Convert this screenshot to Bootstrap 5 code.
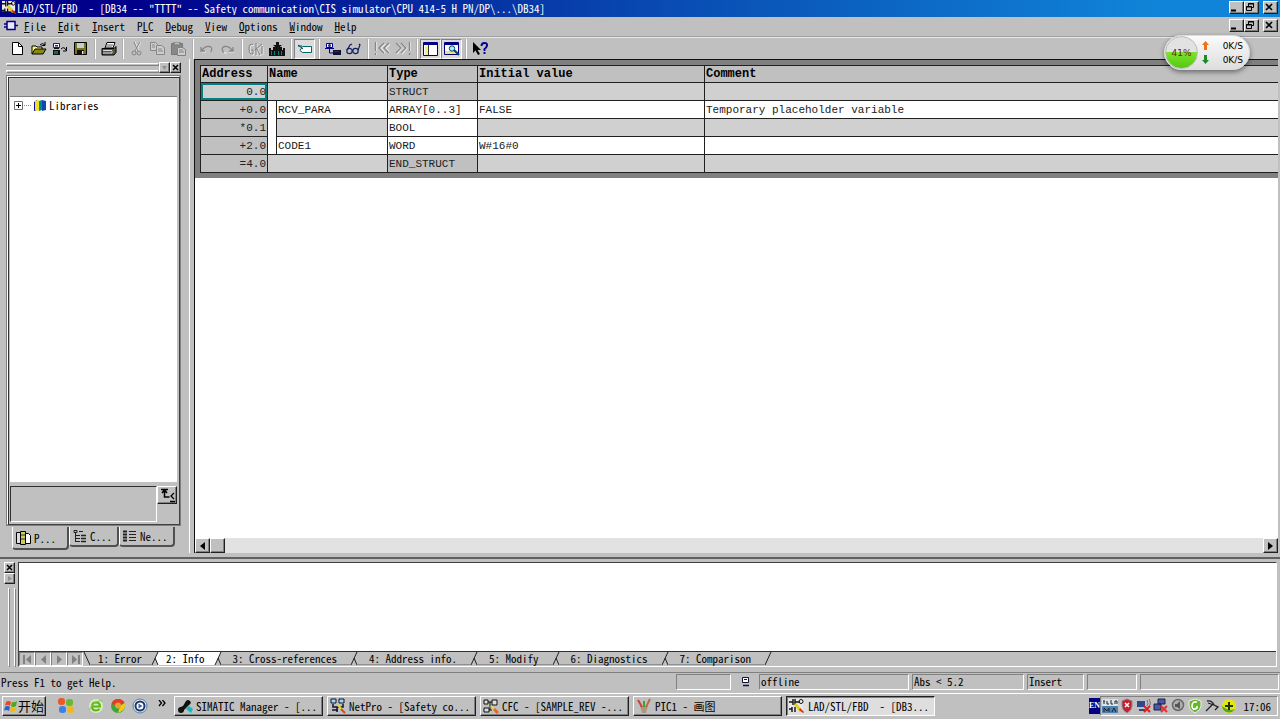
<!DOCTYPE html>
<html lang="en">
<head>
<meta charset="utf-8">
<meta name="viewport" content="width=device-width, initial-scale=1">
<title>LAD/STL/FBD</title>
<link href="https://cdn.jsdelivr.net/npm/bootstrap@5.3.0/dist/css/bootstrap.min.css" rel="stylesheet">
<style>
:root{--face:#c0c0c0;--hi:#fff;--sh:#808080;--dk:#202020}
body{font:11px/14px "Noto Sans Mono CJK SC","Liberation Mono","Noto Sans CJK SC",monospace;color:#000;background:var(--face)}
button,input,select{font:inherit;color:inherit}
button{border:0;padding:0;background:var(--face)}
a{color:inherit;text-decoration:none}
svg{display:block;flex:none}
.ws{white-space:pre}
.raised{background:var(--face);border:1px solid;border-color:var(--hi) var(--dk) var(--dk) var(--hi);box-shadow:inset -1px -1px var(--sh)}
.sunken{border:1px solid;border-color:var(--sh) var(--hi) var(--hi) var(--sh)}
.titlebar{height:17px;background:linear-gradient(90deg,#00008a 10%,#0848b0 50%,#1084d8 90%);color:#fff;padding:0 2px 2px 2px}
.menubar{height:20px;padding:0 2px 2px 4px;border-bottom:1px solid #a0a0a0}
.menubar nav{gap:12px;margin-left:6px}
.winbtn{width:15px;height:13px}
.toolbar{height:22px;padding-left:7px;border-top:1px solid #e8e8e8;position:relative;z-index:2}
.tool{width:21px;height:20px;display:grid;place-items:center;border:1px solid transparent}
.tool.pressed{border-color:var(--sh) var(--hi) var(--hi) var(--sh);background:#dcdcdc}
.tsep{width:2px;height:20px;margin:0 2px 0 3px;border-left:1px solid #b0b0b0;border-right:1px solid var(--hi)}
.meter{position:absolute;right:30px;top:-3px;height:35px;width:86px;border-radius:18px;background:linear-gradient(#fafafa,#dedede);border:1px solid #ddd;box-shadow:0 2px 5px #0007;font:10px/14px "DejaVu Sans","Noto Sans",sans-serif}
.meter .ball{width:33px;height:33px;border-radius:50%;background:linear-gradient(#e2e2e2 48%,#7be428 50%,#55c713);border:1px solid #bbb;color:#6a2020;font-size:9px}
.meter .rate{width:34px;text-align:right;font-size:9px}
.dock{width:190px;padding:3px 8px 0 6px;border-right:1px solid var(--hi)}
.grip{height:3px;border:1px solid;border-color:var(--hi) var(--sh) var(--sh) var(--hi)}
.mini{width:11px;height:11px;display:grid;place-items:center}
.frame{border:2px solid;border-color:var(--hi) #404040 #404040 var(--hi);outline:1px solid var(--sh);outline-offset:-1px;padding:2px;margin-top:2px;box-shadow:inset 1px 1px #303030}
.treehead{height:18px;border-bottom:1px solid var(--sh);background:#bcbcbc}
.well{border:1px solid;border-color:#303030 var(--hi) var(--hi) #303030}
.treefoot{height:41px}
.treerow{height:16px;padding-left:4px;gap:2px}
.docktabs{margin:1px 0 0 6px;height:26px}
.docktab{height:20px;width:50px;border:solid;border-width:0 2px 2px 1px;border-color:var(--hi) #505050 #505050 var(--hi);border-radius:0 0 4px 4px;gap:3px;padding:0 3px}
.docktab.active{height:23px;width:57px}
.docktab.wide{width:56px}
.editor{border:solid;border-width:1px 0 0 1px;border-color:#101010;margin:0 2px 0 4px;background:#fff}
.gridwrap{background:#808080;padding:5px 0 5px 5px}
.decl{width:100%;table-layout:fixed;border-collapse:collapse;background:#d0d0d0;font:11px/14px "Liberation Mono",monospace;color:#202020}
.decl th,.decl td{border:1px solid #202020;height:18px;padding:0 1px;white-space:pre;overflow:hidden;vertical-align:middle}
.decl th{background:#c0c0c0;font-size:12px;color:#000;height:17px}
.decl tr>*:last-child{border-right:0}
.decl .addr{text-align:right;background:#c0c0c0}
.decl .edit{background:#fff}
.decl .kw{background:#c0c0c0}
.decl .cur{box-shadow:inset 0 0 0 2px #008080;background:#d0d0d0}
.c-addr{width:67px}.c-ind{width:9px}.c-name{width:111px}.c-type{width:90px}.c-init{width:227px}
.hscroll{height:15px;background:#e2e2e2}
.hscroll button,.hscroll i{width:15px;height:15px;display:grid;place-items:center}
.output{height:115px;margin-top:4px;border-top:2px solid #606060;padding:3px 3px 5px 3px}
.output .side{width:15px;padding:0 3px 0 1px}
.vgrip{width:3px;border:1px solid;border-color:var(--hi) var(--sh) var(--sh) var(--hi)}
.pane{border:1px solid;border-color:#404040 var(--hi) var(--hi) #404040;background:#fff}
.pane textarea{border:0;resize:none;outline:0;padding:2px;background:#fff}
.tabrow{height:15px;background:var(--face);border-top:1px solid #303030}
.navb{width:16px;height:14px;display:grid;place-items:center}
.otab{height:13px;line-height:12px;padding:0 8px;background:var(--face);border-bottom:1px solid #909090}
.otab.tight{padding:0 9px 0 7px}
.otab.roomy{padding:0 13px 0 11px}
.otab.active{background:#fff;border-color:#fff}
.status{height:21px;border-top:1px solid var(--sh);padding:0 1px 2px 1px;gap:3px}
.status .sunken{height:16px;padding:0 1px;line-height:12px}
.w-a{width:55px}.w-b{width:150px}.w-c{width:112px}.w-d{width:57px}.w-e{width:50px}.w-f{width:139px}
.taskbar{height:26px;border-top:1px solid var(--hi);padding:0 2px 1px 2px}
.startb{width:44px;height:20px;font:13px/16px "Noto Sans CJK SC",sans-serif}
.task{flex:0 1 149px;height:20px;gap:3px;padding:0 2px;min-width:0;text-align:left;white-space:pre;overflow:hidden}
.task.on{border-color:var(--dk) var(--hi) var(--hi) var(--dk);background:#dedede;box-shadow:inset 1px 1px var(--sh)}
.lang{height:16px;background:#000080;color:#fff;font:bold 8px/16px "Liberation Serif",serif}
.tray{height:20px;width:178px;gap:1px;padding:0 2px 0 1px}
.quick{width:120px;gap:6px}
</style>
</head>
<body class="d-flex flex-column min-vh-100 overflow-hidden">
<svg width="0" height="0" class="position-absolute" aria-hidden="true">
<defs>
<symbol id="i-min" viewBox="0 0 10 9"><path d="M1 7.5h5" stroke="#000" stroke-width="2"/></symbol>
<symbol id="i-res" viewBox="0 0 10 9"><path d="M3.5 3V.5h5v4H7M3 1h6M1.500 3.500h5v4h-5zM1 4h6" fill="none" stroke="#000"/></symbol>
<symbol id="i-x" viewBox="0 0 10 9"><path d="M2 1l6 6M8 1l-6 6" stroke="#000" stroke-width="1.700"/></symbol>
<symbol id="i-lad" viewBox="0 0 16 16"><path fill="#e8e8e8" d="M0 1h14v11H0z"/><path d="M0 4h4M4 1v6M6 1v6M6 4h5M0 11h3M3 9v5M6 9v5" stroke="#111" stroke-width="1.400"/><circle cx="12" cy="3.500" r="2" fill="none" stroke="#111"/><path d="M6 6l6 7" stroke="#e0d020" stroke-width="3"/><path d="M11 10l4 4-1 1-4-3z" fill="#d83010"/></symbol>
</defs>
</svg>

<header class="titlebar d-flex align-items-center">
<svg width="15" height="15"><use href="#i-lad"/></svg>
<span class="ws flex-grow-1 overflow-hidden">LAD/STL/FBD  - [DB34 -- "TTTT" -- Safety communication\CIS simulator\CPU 414-5 H PN/DP\...\DB34]</span>
<button class="raised winbtn" aria-label="Minimize"><svg width="10" height="9"><use href="#i-min"/></svg></button>
<button class="raised winbtn" aria-label="Restore"><svg width="10" height="9"><use href="#i-res"/></svg></button>
<button class="raised winbtn ms-1" aria-label="Close"><svg width="10" height="9"><use href="#i-x"/></svg></button>
</header>

<div class="menubar d-flex align-items-center">
<svg width="14" height="12" viewBox="0 0 14 12"><path d="M3 1.500h8v8H3z" fill="#e8e8ff" stroke="#000080" stroke-width="1.500"/><path d="M0 4h3M0 7h3M11 5.500h3" stroke="#000080" stroke-width="1.500"/></svg>
<nav class="d-flex flex-grow-1">
<a href="#"><u>F</u>ile</a><a href="#"><u>E</u>dit</a><a href="#"><u>I</u>nsert</a><a href="#">P<u>L</u>C</a><a href="#"><u>D</u>ebug</a><a href="#"><u>V</u>iew</a><a href="#"><u>O</u>ptions</a><a href="#"><u>W</u>indow</a><a href="#"><u>H</u>elp</a>
</nav>
<button class="raised winbtn" aria-label="Minimize document"><svg width="10" height="9"><use href="#i-min"/></svg></button>
<button class="raised winbtn" aria-label="Restore document"><svg width="10" height="9"><use href="#i-res"/></svg></button>
<button class="raised winbtn ms-1" aria-label="Close document"><svg width="10" height="9"><use href="#i-x"/></svg></button>
</div>

<div class="toolbar d-flex align-items-center" role="toolbar">
<button class="tool" aria-label="New"><svg width="11" height="13"><path d="M.5.5h6l4 4v8H.5z" fill="#fff" stroke="#000"/><path d="M6.500.5v4h4" fill="none" stroke="#000"/></svg></button>
<button class="tool" aria-label="Open"><svg width="16" height="13"><path d="M1 12V4h4l1 1h5v3" fill="#ff6" stroke="#000"/><path d="M1 12l3-5h11l-3 5z" fill="#8a8a10" stroke="#000"/><path d="M9 3q2-3 5 0M14 0v3.500h-3.500" fill="none" stroke="#000"/></svg></button>
<button class="tool" aria-label="Open online"><svg width="16" height="14"><path d="M1.500 1.500h6v4h-6z" fill="#fff" stroke="#224"/><path d="M3 3h3v1.500H3z" fill="#22a"/><path d="M2 6h5v1H2zM1 8h7v5H1z" fill="#111"/><path d="M2 9h4v3H2z" fill="#166"/><path d="M9 7q3-3 5 1M14.500 5v4H11" fill="none" stroke="#000"/></svg></button>
<button class="tool" aria-label="Save"><svg width="13" height="13"><path d="M.5.5h12v12H.5z" fill="#77771a" stroke="#000"/><path d="M3 1h7v5H3z" fill="#ccc"/><path d="M3 8h7v5H3z" fill="#111"/><path d="M8 9h1.500v3H8z" fill="#eee"/></svg></button>
<span class="tsep"></span>
<button class="tool" aria-label="Print"><svg width="16" height="14"><path d="M4 6l2-5.500h8L12 6z" fill="#fff" stroke="#000"/><path d="M6 3h6M5 5h6" stroke="#555"/><path d="M1 6.500h12l2-2v6l-2 2.500H1z" fill="#555" stroke="#000"/><path d="M2 8.500h9M2 11h9" stroke="#ddd"/><path d="M10 10h2" stroke="#dd0"/></svg></button>
<span class="tsep"></span>
<button class="tool" aria-label="Cut" disabled><svg width="12" height="14" fill="none" stroke="#868686"><path d="M4 0l4 9M10 0L5 9" stroke="#eee"/><path d="M3 0l4 9M9 0L4 9"/><circle cx="3" cy="11" r="2"/><circle cx="8" cy="11" r="2"/></svg></button>
<button class="tool" aria-label="Copy" disabled><svg width="15" height="13" fill="#ccc" stroke="#868686"><path d="M.5.5h5l2 2v6h-7z"/><path d="M6.500 3.500h5l3 2v7h-8zM2 3h3M2 5h3M8 7h4M8 9h5"/></svg></button>
<button class="tool" aria-label="Paste" disabled><svg width="15" height="14"><path d="M.5 1.500h11v11H.5z" fill="#888" stroke="#777"/><path d="M3 0h6v3H3z" fill="#bbb" stroke="#777"/><path d="M6.500 5.500h5l3 2v6h-8z" fill="#ccc" stroke="#808080"/><path d="M8 8h4M8 10h5" stroke="#808080"/></svg></button>
<span class="tsep"></span>
<button class="tool" aria-label="Undo" disabled><svg width="13" height="10" fill="none"><path d="M2 8h4M10 9q3-2 1-6" stroke="#eee"/><path d="M1 3v4h4M1.500 6.500q4-5 8-4t1 6" stroke="#868686" stroke-width="1.300"/></svg></button>
<button class="tool" aria-label="Redo" disabled><svg width="13" height="10" fill="none"><path d="M8 8h5M3 9h3" stroke="#eee"/><path d="M12 3v4H8M11.500 6.500q-4-5-8-4t-1 6" stroke="#868686" stroke-width="1.300"/></svg></button>
<span class="tsep"></span>
<button class="tool" aria-label="Compile" disabled><svg width="16" height="14" fill="none"><path d="M5 2.500Q1 1 1 7t4 5V8H3M8 1v12M7 8l7-6M9 7l3 6M14 4v8" stroke="#eee" transform="translate(1 1)"/><path d="M5 2.500Q1 1 1 7t4 5V8H3M8 1v12M7 8l7-6M9 7l3 6M14 4v8" stroke="#808080"/></svg></button>
<button class="tool" aria-label="Download"><svg width="16" height="14"><path d="M0 6h2v2h12V6h2v8H0z" fill="#111"/><path d="M7 0h3v3h3L8.500 7 4 3h3zM4 5h9v3H4z" fill="#111"/><path d="M2.500 9v4M5.500 9v4M9.500 9v4M12.500 9v4" stroke="#0a8080"/></svg></button>
<span class="tsep"></span>
<button class="tool pressed" aria-label="Symbolic view" aria-pressed="true"><svg width="14" height="12"><path d="M4.500 3.500h9v6h-9L2 7.500z" fill="#fff" stroke="#066"/><path d="M0 2l5 4M0 3h4" stroke="#044"/></svg></button>
<span class="tsep"></span>
<button class="tool" aria-label="Monitor"><svg width="16" height="14"><path d="M1.500 1.500h6v4h-6z" fill="#fff" stroke="#008"/><circle cx="4.500" cy="3.500" r="1.500" fill="#22a"/><path d="M0 6.500h9M4.500 7v4H8" stroke="#008" fill="none"/><path d="M8 8h8v5H8z" fill="#113"/><path d="M9 9h5v1H9z" fill="#22b"/></svg></button>
<button class="tool" aria-label="Glasses"><svg width="15" height="12" fill="none" stroke="#112060" stroke-width="1.200"><circle cx="3.500" cy="8" r="2.700"/><circle cx="9.500" cy="8" r="2.700"/><path d="M1 7l3-5 2-1M12 7l2-5-1-1M6 7.500h1"/></svg></button>
<span class="tsep"></span>
<button class="tool" aria-label="Previous error" disabled><svg width="16" height="13" fill="none" stroke="#868686" stroke-width="1.300"><path d="M2.500 0v9M2.500 11v2M11 2L7 6l4 5M16 2l-4 4 4 5" stroke="#eee"/><path d="M1.500 0v9M1.500 11v2M10 1L5 6l5 5M15 1l-5 5 5 5"/></svg></button>
<button class="tool" aria-label="Next error" disabled><svg width="16" height="13" fill="none" stroke="#868686" stroke-width="1.300"><path d="M15.500 0v9M2 2l5 4-5 6M7 2l5 4-5 6" stroke="#eee"/><path d="M14.500 0v9M14.500 11v2M1 1l5 5-5 5M6 1l5 5-5 5"/></svg></button>
<span class="tsep"></span>
<button class="tool pressed" aria-label="Overviews" aria-pressed="true"><svg width="15" height="14"><path d="M.5.5h14v13H.5z" fill="#fff" stroke="#000080"/><path d="M1 1h13v2H1z" fill="#000080"/><path d="M2 4h3v9H2z" fill="#f2f090"/><path d="M5.500 3v10" stroke="#333"/></svg></button>
<button class="tool pressed" aria-label="Details" aria-pressed="true"><svg width="16" height="14"><path d="M.5.5h14v12H.5z" fill="#fff" stroke="#000080"/><path d="M1 1h13v2H1z" fill="#000080"/><path d="M1 9h13v3H1z" fill="#e8e480"/><circle cx="8" cy="6.500" r="2.700" fill="#aef" stroke="#046"/><path d="M10 8l5 5" stroke="#046" stroke-width="2"/></svg></button>
<span class="tsep"></span>
<button class="tool" aria-label="Context help"><svg width="16" height="14"><path d="M1 0v11l2.500-2.500L6 13l2-1-2.500-4H9z"/><path d="M9.500 4q0-3 3-3t2.500 2.500-2.500 3.500v2M12.500 10v2" fill="none" stroke="#000090" stroke-width="1.900"/></svg></button>
<div class="meter d-flex align-items-center">
<span class="ball d-flex align-items-center justify-content-center flex-shrink-0">41%</span>
<div class="flex-grow-1 ps-1">
<div class="d-flex align-items-center"><svg width="7" height="9"><path d="M3.500 0L7 4H5v5H2V4H0z" fill="#e8741c"/></svg><span class="rate">0K/S</span></div>
<div class="d-flex align-items-center"><svg width="7" height="9"><path d="M3.500 9L7 5H5V0H2v5H0z" fill="#1c8a28"/></svg><span class="rate">0K/S</span></div>
</div>
</div>
</div>

<main class="d-flex flex-grow-1">
<aside class="dock d-flex flex-column flex-shrink-0">
<div class="d-flex align-items-center">
<div class="flex-grow-1"><div class="grip"></div><div class="grip mt-1"></div></div>
<button class="raised mini" aria-label="Dock"><svg width="7" height="6"><path d="M1 1h5L3.500 5z" fill="#909090"/></svg></button>
<button class="raised mini" aria-label="Close overview"><svg width="8" height="7"><path d="M1 1l5 5M6 1L1 6" stroke="#000" stroke-width="1.500"/></svg></button>
</div>
<div class="frame d-flex flex-column flex-grow-1">
<div class="treehead"></div>
<div class="bg-white flex-grow-1">
<div class="treerow d-flex align-items-center">
<svg width="18" height="11"><path d="M.5 1.500h8v8h-8z" fill="#fff" stroke="#707070"/><path d="M2 5.500h5M4.500 3v5" stroke="#000"/><path d="M10 5.500h8" stroke="#909090" stroke-dasharray="1 1"/></svg>
<svg width="13" height="13"><path d="M0 3l3-2v10l-3 1z" fill="#118"/><path d="M1 2l3-1 1 1v10l-4-1z" fill="#f0e020"/><path d="M5 2l3-1v10l-3 1z" fill="#088"/><path d="M8 1l4 1v9l-4 1z" fill="#1048b0"/></svg>
<span>Libraries</span>
</div>
</div>
<div class="treefoot d-flex pt-1 border-top border-white">
<div class="well flex-grow-1"></div>
<div><button class="raised d-flex align-items-center justify-content-center" aria-label="Back to top"><svg width="18" height="16"><path d="M3 2.500h7M6.500 2v8h5M4 6l2.500-3L9 6" fill="none" stroke="#000" stroke-width="1.500"/><path d="M16 6l-3 3 3 3M12 14.500h5" fill="none" stroke="#000" stroke-width="1.300"/></svg></button></div>
</div>
</div>
<div class="docktabs d-flex align-items-start">
<button class="docktab active d-flex align-items-center"><svg width="15" height="14"><path d="M.5 1.500h4v11h-4z" fill="#ddd" stroke="#000"/><path d="M4.500.5h5v13h-5z" fill="#cccc60" stroke="#000"/><path d="M5 4h4M5 8h4" stroke="#333"/><path d="M9.500 2.500h3l2 2v8h-5z" fill="#fff" stroke="#000"/></svg>P...</button>
<button class="docktab d-flex align-items-center"><svg width="14" height="13" fill="none" stroke="#222"><path d="M1 .5h3v2H1zM6 1.500h4M2.500 2v10M3 5.500h4M3 8.500h4M3 11.500h4" /><path d="M8 5.500h5M8 8.500h5M8 11.500h5" stroke-width="1.500"/></svg>C...</button>
<button class="docktab wide d-flex align-items-center"><svg width="14" height="13" fill="none" stroke="#222"><path d="M0 1.500h4M0 4.500h4M0 7.500h4M0 10.500h4" stroke-width="2"/><path d="M6 1.500h7M6 4.500h7M6 7.500h7M6 10.500h7"/></svg>Ne...</button>
</div>
</aside>

<section class="editor d-flex flex-column flex-grow-1 overflow-hidden">
<div class="gridwrap">
<table class="decl">
<colgroup><col class="c-addr"><col class="c-ind"><col class="c-name"><col class="c-type"><col class="c-init"><col></colgroup>
<thead><tr><th>Address</th><th colspan="2">Name</th><th>Type</th><th>Initial value</th><th>Comment</th></tr></thead>
<tbody>
<tr><td class="addr cur">0.0</td><td colspan="2"></td><td class="kw">STRUCT</td><td></td><td></td></tr>
<tr><td class="addr">+0.0</td><td class="edit" rowspan="3"></td><td class="edit">RCV_PARA</td><td class="edit">ARRAY[0..3]</td><td class="edit">FALSE</td><td class="edit">Temporary placeholder variable</td></tr>
<tr><td class="addr">*0.1</td><td></td><td class="edit">BOOL</td><td></td><td></td></tr>
<tr><td class="addr">+2.0</td><td class="edit">CODE1</td><td class="edit">WORD</td><td class="edit">W#16#0</td><td class="edit"></td></tr>
<tr><td class="addr">=4.0</td><td colspan="2"></td><td class="kw">END_STRUCT</td><td></td><td></td></tr>
</tbody>
</table>
</div>
<div class="flex-grow-1"></div>
<div class="hscroll d-flex">
<button class="raised" aria-label="Scroll left"><svg width="5" height="8"><path d="M5 0v8L0 4z"/></svg></button>
<i class="raised"></i><span class="flex-grow-1"></span>
<button class="raised" aria-label="Scroll right"><svg width="5" height="8"><path d="M0 0v8l5-4z"/></svg></button>
</div>
</section>
</main>

<section class="output d-flex">
<div class="side d-flex flex-column">
<button class="raised mini" aria-label="Close details"><svg width="8" height="7"><path d="M1 1l5 5M6 1L1 6" stroke="#000" stroke-width="1.500"/></svg></button>
<button class="raised mini" aria-label="Dock details"><svg width="6" height="7"><path d="M1 1v5l4-2.500z" fill="#909090"/></svg></button>
<div class="d-flex flex-grow-1 mt-1 ms-1 gap-1"><span class="vgrip"></span><span class="vgrip"></span></div>
</div>
<div class="pane flex-grow-1 d-flex flex-column">
<textarea class="flex-grow-1 w-100" aria-label="Info" readonly></textarea>
<div class="tabrow d-flex">
<button class="navb sunken" aria-label="First tab"><svg width="9" height="9" fill="#808080"><path d="M0 0h2v9H0zM8 0v9L3 4.500z"/></svg></button>
<button class="navb sunken" aria-label="Back"><svg width="9" height="9" fill="#808080"><path d="M7 0v9L2 4.500z"/></svg></button>
<button class="navb sunken" aria-label="Forward"><svg width="9" height="9" fill="#808080"><path d="M2 0v9l5-4.500z"/></svg></button>
<button class="navb sunken" aria-label="Last tab"><svg width="9" height="9" fill="#808080"><path d="M7 0h2v9H7zM1 0v9l5-4.500z"/></svg></button>
<svg width="8" height="14" stroke="#222" fill="none"><path d="M1 0l6 13"/></svg>
<button class="otab tight">1: Error</button>
<svg width="8" height="14" stroke="#222" fill="none"><path d="M7 0h1v14H7L4 6z" fill="#fff" stroke="none"/><path d="M7 0L1 13M4 6l3 7"/></svg>
<button class="otab tight active">2: Info</button>
<svg width="8" height="14" stroke="#222" fill="none"><path d="M0 0h7L1 13H0z" fill="#fff" stroke="none"/><path d="M7 0L1 13M4 6l3 7"/></svg>
<button class="otab roomy">3: Cross-references</button>
<svg width="8" height="14" stroke="#222" fill="none"><path d="M7 0L1 13M4 6l3 7"/></svg>
<button class="otab roomy">4: Address info.</button>
<svg width="8" height="14" stroke="#222" fill="none"><path d="M7 0L1 13M4 6l3 7"/></svg>
<button class="otab roomy">5: Modify</button>
<svg width="8" height="14" stroke="#222" fill="none"><path d="M7 0L1 13M4 6l3 7"/></svg>
<button class="otab roomy">6: Diagnostics</button>
<svg width="8" height="14" stroke="#222" fill="none"><path d="M7 0L1 13M4 6l3 7"/></svg>
<button class="otab roomy">7: Comparison</button>
<svg width="8" height="14" stroke="#222" fill="none"><path d="M7 0L1 13"/></svg>
</div>
</div>
</section>

<div class="status d-flex align-items-center">
<span class="flex-grow-1">Press F1 to get Help.</span>
<span class="sunken w-a"></span>
<svg width="22" height="12"><path d="M8.500 1.500h6v5h-6z" fill="#fff" stroke="#113"/><path d="M10 3h3v1h-3z" fill="#113"/><path d="M9 9.500h6" stroke="#113" stroke-width="1.500"/></svg>
<span class="sunken w-b">offline</span><span class="sunken w-c">Abs &lt; 5.2</span><span class="sunken w-d">Insert</span><span class="sunken w-e"></span><span class="sunken w-f"></span>
</div>

<footer class="taskbar d-flex align-items-center">
<button class="raised startb d-flex align-items-center justify-content-center flex-shrink-0"><svg width="14" height="13"><path d="M2 2q2-2 5 0L6 6Q3 4 1 6z" fill="#e84c1c"/><path d="M8 2q2 1 5-1l-1 5q-3 2-5 0z" fill="#4caa20"/><path d="M1 7q2-2 5 0l-1 4q-3-2-5 0z" fill="#2860d8"/><path d="M7 7q2 2 5 0l-1 4q-3 2-5 0z" fill="#f0b810"/></svg>开始</button>
<div class="quick d-flex align-items-center ms-2 flex-shrink-0">
<svg width="24" height="16" class="me-1"><rect x="4" y="0" width="7" height="7" rx="3" fill="#e85a28"/><rect x="12" y="1" width="7" height="7" rx="3" fill="#68b838"/><rect x="5" y="8" width="7" height="7" rx="3" fill="#3c80e0"/><rect x="13" y="8" width="7" height="7" rx="3" fill="#f0b820"/></svg>
<svg width="16" height="16"><circle cx="8" cy="8" r="7" fill="#d8ecc0"/><path d="M4 8.500h8q0-4-4-4T4 8.500t4 4q2 0 3.500-1.500" fill="none" stroke="#58b818" stroke-width="2"/><path d="M1 12Q7 1 15 3" stroke="#88cc40" fill="none"/></svg>
<svg width="16" height="16"><circle cx="8" cy="8" r="7" fill="#38a838"/><path d="M1.500 6Q3 1 8 1t6.500 4L8 8z" fill="#e23c28"/><path d="M14.500 5Q17 12 8 15l2-7z" fill="#f4c820"/><circle cx="8" cy="7.500" r="3" fill="#e8a030"/></svg>
<svg width="16" height="16"><circle cx="8" cy="8" r="7" fill="#e8f0f8" stroke="#5080a8"/><circle cx="8" cy="8" r="4.500" fill="#fff" stroke="#203860" stroke-width="2"/><path d="M6.500 5.500v5l4-2.500z" fill="#2868c0"/></svg>
<svg width="8" height="13" class="ms-1" fill="none" stroke="#000" stroke-width="1.300"><path d="M1 0l2.500 3L1 6M4.500 0L7 3 4.500 6"/></svg>
</div>
<div class="d-flex gap-1 flex-grow-1 overflow-hidden">
<button class="raised task d-flex align-items-center"><svg width="16" height="16"><path d="M2 12q0-3 4-4l3-5q2-2 4 0t-1 4L7 12q-4 4-5 0z" fill="#111"/><path d="M9 11l3-3 4 3-2 4z" fill="#18b8b8"/><circle cx="4" cy="12" r="3" fill="#111"/></svg>SIMATIC Manager - [...</button>
<button class="raised task d-flex align-items-center"><svg width="16" height="16"><path d="M1 1h5v4H1zM9 1h5v4H9z" fill="#9de" stroke="#113"/><path d="M3 6v3h10V6M7 9v5M2 12h6" stroke="#113" fill="none" stroke-width="1.500"/><path d="M8 7l5 6" stroke="#dd3" stroke-width="2"/><path d="M11 11l4 4" stroke="#d42" stroke-width="2"/></svg>NetPro - [Safety co...</button>
<button class="raised task d-flex align-items-center"><svg width="16" height="16"><path d="M1 2h4v4H1zM9 2h5v5H9zM1 10h5v4H1z" fill="#ddd" stroke="#111"/><path d="M5 4h4M6 12h3M7 4v8" stroke="#111"/><path d="M8 8l4 5" stroke="#dd3" stroke-width="2"/><path d="M11 11l4 4" stroke="#e62" stroke-width="3"/></svg>CFC - [SAMPLE_REV -...</button>
<button class="raised task d-flex align-items-center"><svg width="16" height="16"><path d="M4 8h8l-2 7H6z" fill="#b09880"/><path d="M6 9L2 2" stroke="#d04030" stroke-width="2"/><path d="M8 9V3" stroke="#40a040" stroke-width="2"/><path d="M10 9l4-8" stroke="#c06838" stroke-width="2"/></svg>PIC1 - 画图</button>
<button class="raised task on d-flex align-items-center" aria-pressed="true"><svg width="16" height="16"><use href="#i-lad"/></svg>LAD/STL/FBD  - [DB3...</button>
</div>
<span class="lang flex-shrink-0">EN</span>
<div class="tray sunken d-flex align-items-center flex-shrink-0">
<svg width="16" height="16"><path d="M0 1h16v14H0z" fill="#d8e4ee"/><path d="M0 8h16v7H0z" fill="#4c80b0"/><path d="M1 3h2M2 3v3M5 3v3h2M9 2v4h2M13 6V3h2v3M2 14v-4l3 3 2-3v4M10 14l2-4 2 4" stroke="#222" fill="none"/></svg>
<svg width="16" height="16"><path d="M8 1l5 2v5q0 4-5 7-5-3-5-7V3z" fill="#cc1c30" stroke="#888"/><path d="M6 5l4 4M10 5L6 9" stroke="#fff" stroke-width="1.500"/></svg>
<svg width="16" height="16"><path d="M1 3h8v6H1zM3 11h6v2H3z" fill="#304890"/><path d="M11 2q2 3 0 6M13 1q3 4 0 8" stroke="#777" fill="none"/><path d="M8 8l6 6M14 8l-6 6" stroke="#e02020" stroke-width="2"/></svg>
<svg width="16" height="16"><path d="M5 1h7v5H5zM1 6h7v6H1z" fill="#4858b0" stroke="#223"/><path d="M8 8l6 6M14 8l-6 6" stroke="#e83030" stroke-width="2"/></svg>
<svg width="16" height="16"><circle cx="8" cy="7" r="5.500" fill="#b0b0b0" stroke="#686868" stroke-width="1.500"/><path d="M5 6h2l3-3v8L7 9H5z" fill="#555"/></svg>
<svg width="16" height="16"><path d="M8 1l6 2v5q0 4-6 7-6-3-6-7V3z" fill="#66b82c" stroke="#eee"/><path d="M10 4q-5-1-5 4t5 2V8" stroke="#fff" fill="none" stroke-width="1.600"/></svg>
<svg width="16" height="16" fill="none" stroke="#222" stroke-width="1.300"><path d="M3 3q5-1 7 4l4 2-3 3M9 6L2 13M4 5l6 2"/></svg>
<svg width="16" height="16"><circle cx="8" cy="8" r="7" fill="#e8e410"/><path d="M1 8a7 7 0 0 0 13 3q-6 3-13-3z" fill="#50a820"/><path d="M8 4v8M4 8h8" stroke="#183808" stroke-width="2"/></svg>
<span class="ms-auto me-1">17:06</span>
</div>
</footer>
<script src="https://cdn.jsdelivr.net/npm/bootstrap@5.3.0/dist/js/bootstrap.bundle.min.js"></script>
</body>
</html>
